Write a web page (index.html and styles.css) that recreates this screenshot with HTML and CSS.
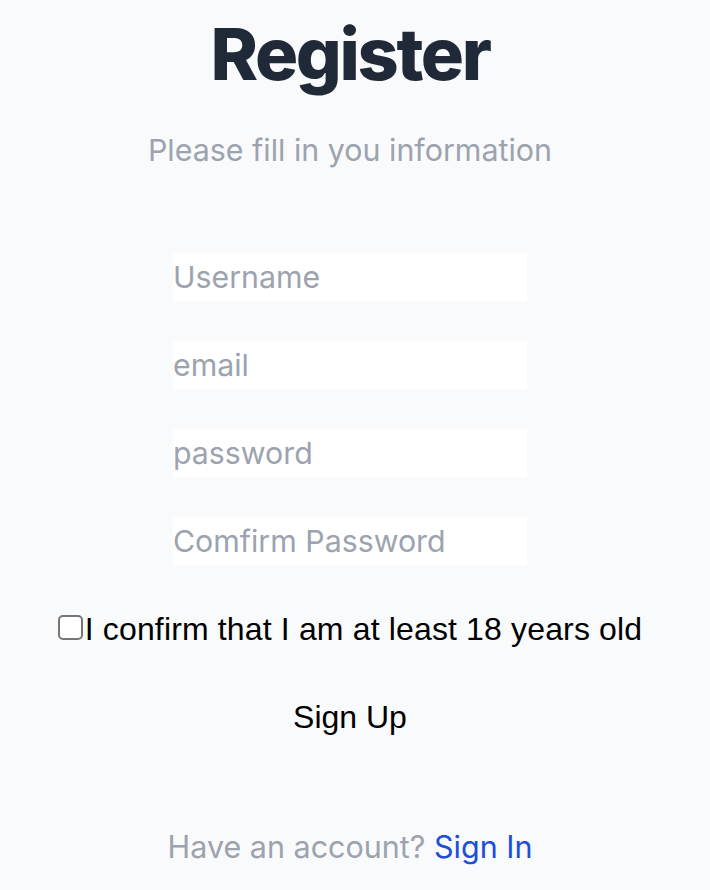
FILE: index.html
```html
<!DOCTYPE html>
<html lang="en">
<head>
<meta charset="utf-8">
<title>Register</title>
<link rel="stylesheet" href="styles.css">
</head>
<body>
<main class="page">
  <h1 class="title">Register</h1>
  <p class="subtitle">Please fill in you information</p>
  <form class="form">
    <input class="field" type="text" placeholder="Username">
    <input class="field" type="email" placeholder="email">
    <input class="field" type="password" placeholder="password">
    <input class="field" type="password" placeholder="Comfirm Password">
    <label class="confirm"><input class="check" type="checkbox"><span>I confirm that I am at least 18 years old</span></label>
    <button class="submit" type="button">Sign Up</button>
  </form>
  <p class="footer">Have an account? <a class="link" href="#">Sign In</a></p>
</main>
</body>
</html>
```
FILE: styles.css
```css
html, body {
  margin: 0;
  padding: 0;
  background: #f9fafb;
}
body {
  font-family: Inter, "Noto Sans", sans-serif;
}
.page {
  width: 700px;
  display: flex;
  flex-direction: column;
  align-items: center;
}
.title {
  margin: 14px 0 0;
  font-size: 72px;
  line-height: 80px;
  font-weight: 800;
  letter-spacing: -0.033em;
  color: #1f2937;
}
.subtitle {
  margin: 32px 0 0;
  font-size: 30.4px;
  line-height: 48px;
  color: #9ca3af;
}
.form {
  margin-top: 79px;
  display: flex;
  flex-direction: column;
  align-items: center;
  gap: 40px;
}
.field {
  box-sizing: border-box;
  width: 354px;
  height: 48px;
  margin: 0;
  padding: 0;
  border: none;
  outline: none;
  background: #ffffff;
  font-family: Inter, "Noto Sans", sans-serif;
  font-size: 30.3px;
  color: #111827;
}
.field::placeholder {
  color: #9ca3af;
  opacity: 1;
}
.confirm {
  display: flex;
  align-items: center;
  font-family: "Liberation Sans", Arial, sans-serif;
  font-size: 32px;
  line-height: 48px;
  letter-spacing: 0.15px;
  color: #000;
}
.check {
  appearance: none;
  -webkit-appearance: none;
  box-sizing: border-box;
  width: 25px;
  height: 25px;
  margin: -4px 2px 0 0;
  border: 2px solid #767676;
  border-radius: 5px;
  background: #fff;
}
.submit {
  margin: 0;
  padding: 0;
  border: none;
  background: transparent;
  font-family: "Liberation Sans", Arial, sans-serif;
  font-size: 32px;
  line-height: 48px;
  color: #000;
}
.footer {
  margin: 82px 0 0;
  font-size: 30.5px;
  line-height: 48px;
  color: #9ca3af;
}
.link {
  color: #1d4ed8;
  text-decoration: none;
}
```
